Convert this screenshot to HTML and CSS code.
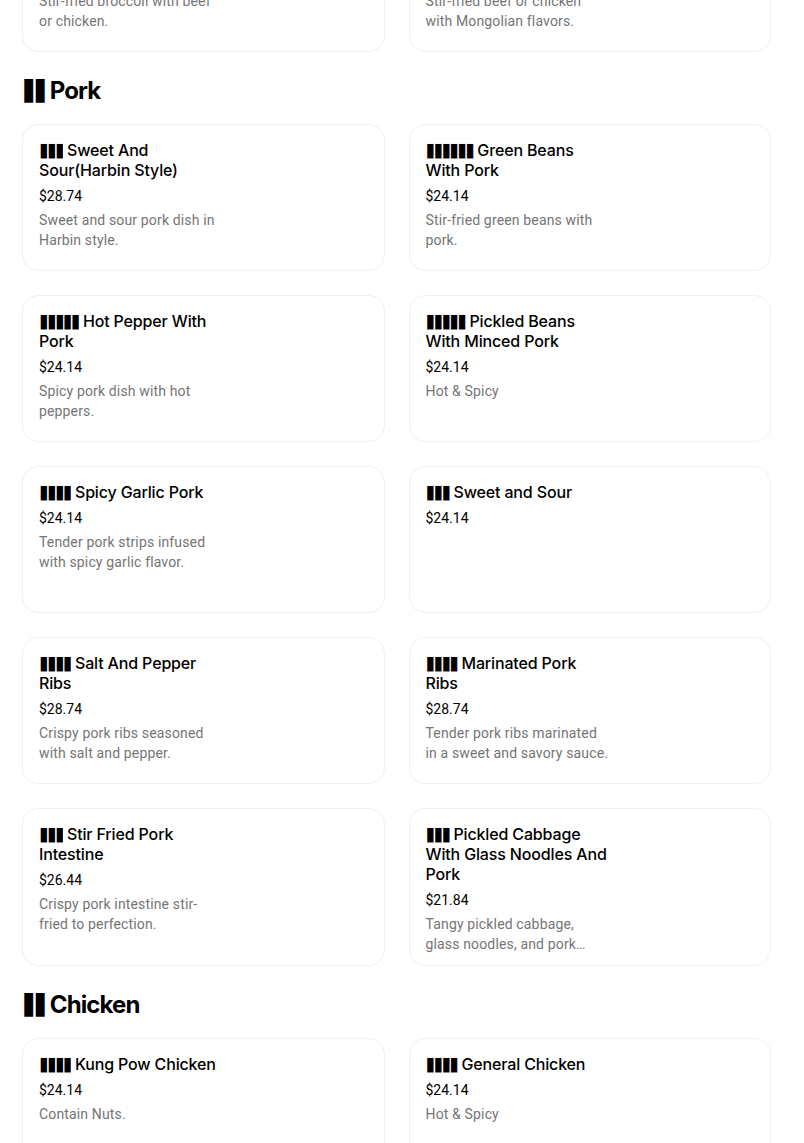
FILE: index.html
```html
<!DOCTYPE html>
<html lang="en">
<head>
<meta charset="utf-8">
<title>Menu</title>
<link rel="stylesheet" href="styles.css">
</head>
<body>
<main class="menu">
  <div class="grid grid-top">
    <article class="card">
      <div class="info">
        <h3 class="title"><span class="cjk">▮▮▮▮</span> Broccoli With Beef Or Chicken</h3>
        <div class="price">$24.14</div>
        <p class="desc">Stir-fried broccoli with beef or chicken.</p>
      </div>
    </article>
    <article class="card">
      <div class="info">
        <h3 class="title"><span class="cjk">▮▮▮</span> Mongolian Beef Or Chicken</h3>
        <div class="price">$24.14</div>
        <p class="desc">Stir-fried beef or chicken with Mongolian flavors.</p>
      </div>
    </article>
  </div>

  <h2 class="section"><span class="cjk">▮▮</span> Pork</h2>
  <div class="grid">
    <article class="card">
      <div class="info">
        <h3 class="title"><span class="cjk">▮▮▮</span> Sweet And Sour(Harbin Style)</h3>
        <div class="price">$28.74</div>
        <p class="desc">Sweet and sour pork dish in Harbin style.</p>
      </div>
    </article>
    <article class="card">
      <div class="info">
        <h3 class="title"><span class="cjk">▮▮▮▮▮▮</span> Green Beans With Pork</h3>
        <div class="price">$24.14</div>
        <p class="desc">Stir-fried green beans with pork.</p>
      </div>
    </article>
    <article class="card">
      <div class="info">
        <h3 class="title"><span class="cjk">▮▮▮▮▮</span> Hot Pepper With Pork</h3>
        <div class="price">$24.14</div>
        <p class="desc">Spicy pork dish with hot peppers.</p>
      </div>
    </article>
    <article class="card">
      <div class="info">
        <h3 class="title"><span class="cjk">▮▮▮▮▮</span> Pickled Beans With Minced Pork</h3>
        <div class="price">$24.14</div>
        <p class="desc">Hot &amp; Spicy</p>
      </div>
    </article>
    <article class="card">
      <div class="info">
        <h3 class="title"><span class="cjk">▮▮▮▮</span> Spicy Garlic Pork</h3>
        <div class="price">$24.14</div>
        <p class="desc">Tender pork strips infused with spicy garlic flavor.</p>
      </div>
    </article>
    <article class="card">
      <div class="info">
        <h3 class="title"><span class="cjk">▮▮▮</span> Sweet and Sour</h3>
        <div class="price">$24.14</div>
      </div>
    </article>
    <article class="card">
      <div class="info">
        <h3 class="title"><span class="cjk">▮▮▮▮</span> Salt And Pepper Ribs</h3>
        <div class="price">$28.74</div>
        <p class="desc">Crispy pork ribs seasoned with salt and pepper.</p>
      </div>
    </article>
    <article class="card">
      <div class="info">
        <h3 class="title"><span class="cjk">▮▮▮▮</span> Marinated Pork Ribs</h3>
        <div class="price">$28.74</div>
        <p class="desc">Tender pork ribs marinated in a sweet and savory sauce.</p>
      </div>
    </article>
    <article class="card">
      <div class="info">
        <h3 class="title"><span class="cjk">▮▮▮</span> Stir Fried Pork Intestine</h3>
        <div class="price">$26.44</div>
        <p class="desc">Crispy pork intestine stir-fried to perfection.</p>
      </div>
    </article>
    <article class="card">
      <div class="info">
        <h3 class="title"><span class="cjk">▮▮▮</span> Pickled Cabbage With Glass Noodles And Pork</h3>
        <div class="price">$21.84</div>
        <p class="desc clamp">Tangy pickled cabbage, glass noodles, and pork simmered together.</p>
      </div>
    </article>
  </div>

  <h2 class="section"><span class="cjk">▮▮</span> Chicken</h2>
  <div class="grid">
    <article class="card">
      <div class="info">
        <h3 class="title"><span class="cjk">▮▮▮▮</span> Kung Pow Chicken</h3>
        <div class="price">$24.14</div>
        <p class="desc">Contain Nuts.</p>
      </div>
    </article>
    <article class="card">
      <div class="info">
        <h3 class="title"><span class="cjk">▮▮▮▮</span> General Chicken</h3>
        <div class="price">$24.14</div>
        <p class="desc">Hot &amp; Spicy</p>
      </div>
    </article>
  </div>
</main>
</body>
</html>
```

FILE: styles.css
```css
* { box-sizing: border-box; }

html, body {
  margin: 0;
  padding: 0;
  background: #ffffff;
}

body {
  font-family: Roboto, "Noto Sans", sans-serif;
  color: #000000;
}

.menu {
  padding: 0 33px 40px 22px;
}

.grid {
  display: grid;
  grid-template-columns: 1fr 1fr;
  column-gap: 24px;
  row-gap: 24px;
}

.grid-top {
  margin-top: -95px;
}

.card {
  min-height: 147px;
  border: 1px solid #f0f0f0;
  border-radius: 16px;
  padding: 15px 16px 11px 16px;
  background: #ffffff;
}

.info {
  width: 186px;
}

.title {
  margin: 0;
  font-family: Inter, "Noto Sans", sans-serif;
  font-size: 16px;
  font-weight: 500;
  line-height: 20px;
  letter-spacing: -0.15px;
  color: #000000;
}

.cjk {
  display: inline-block;
  font-family: "DejaVu Sans", sans-serif;
  line-height: 1;
  vertical-align: baseline;
  transform-origin: 50% 84.6%;
}

.title .cjk {
  font-size: 17px;
  letter-spacing: -1.4px;
  transform: scaleY(1.12);
}

.price {
  margin-top: 6px;
  font-size: 14px;
  line-height: 20px;
  color: #000000;
}

.desc {
  width: 184px;
  margin: 4px 0 0 0;
  font-size: 14px;
  line-height: 20px;
  letter-spacing: 0.15px;
  color: #757575;
}

.clamp {
  display: -webkit-box;
  -webkit-line-clamp: 2;
  -webkit-box-orient: vertical;
  overflow: hidden;
}

.section {
  margin: 25px 0 19px 0;
  font-family: Inter, "Noto Sans", sans-serif;
  font-size: 24px;
  font-weight: 700;
  line-height: 28px;
  letter-spacing: -0.9px;
}

.section .cjk {
  font-size: 24px;
  letter-spacing: -1.7px;
  transform: scaleY(1.3);
}
```
